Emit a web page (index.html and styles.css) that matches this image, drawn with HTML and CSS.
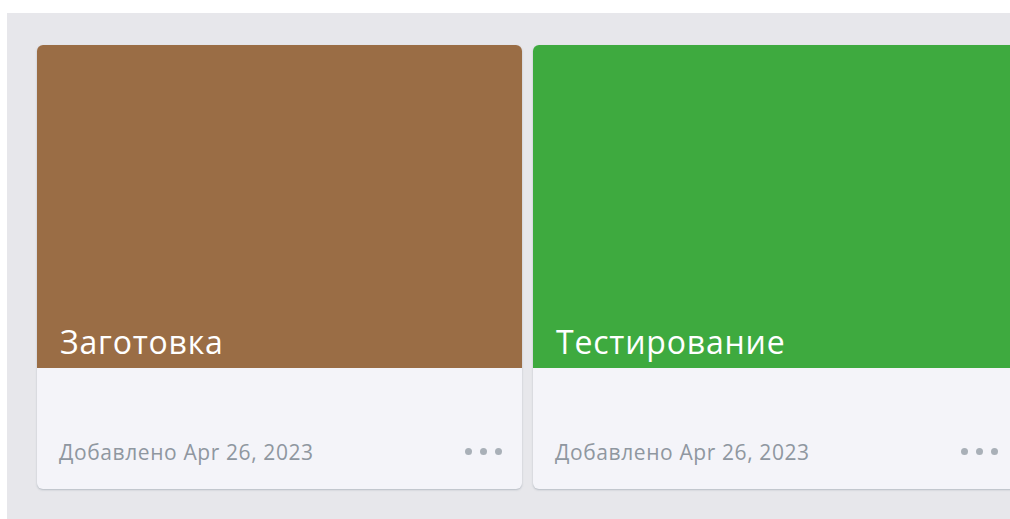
FILE: index.html
```html
<!DOCTYPE html>
<html lang="ru">
<head>
<meta charset="utf-8">
<title>Проекты</title>
<link rel="stylesheet" href="styles.css">
</head>
<body>
<main class="board">
  <div class="cards">
    <article class="card">
      <div class="card-cover cover-brown">
        <h2 class="card-title">Заготовка</h2>
      </div>
      <div class="card-footer">
        <span class="card-date">Добавлено Apr 26, 2023</span>
        <button class="card-menu" aria-label="Меню"><i></i><i></i><i></i></button>
      </div>
    </article>
    <article class="card">
      <div class="card-cover cover-green">
        <h2 class="card-title">Тестирование</h2>
      </div>
      <div class="card-footer">
        <span class="card-date">Добавлено Apr 26, 2023</span>
        <button class="card-menu" aria-label="Меню"><i></i><i></i><i></i></button>
      </div>
    </article>
  </div>
</main>
</body>
</html>
```

FILE: styles.css
```css
html, body {
  margin: 0;
  padding: 0;
  background: #ffffff;
  overflow: hidden;
}

body {
  font-family: "Open Sans", "Noto Sans", sans-serif;
  padding: 13px 0 0 7px;
}

.board {
  background: #e7e7eb;
  height: 520px;
  padding: 32px 0 0 30px;
  box-sizing: border-box;
  overflow: hidden;
}

.cards {
  display: flex;
  gap: 11px;
  width: 2000px;
}

.card {
  width: 485px;
  flex: 0 0 485px;
  border-radius: 6px;
  overflow: hidden;
  background: #f4f4f9;
  box-shadow: 0 1px 2px rgba(90, 105, 120, 0.35);
}

.card-cover {
  height: 323px;
  display: flex;
  align-items: flex-end;
  padding: 0 22px 8px 23px;
  box-sizing: border-box;
}

.cover-brown { background: #9a6d45; }
.cover-green { background: #3eaa3f; }

.card-title {
  margin: 0;
  color: #ffffff;
  font-weight: 400;
  font-size: 32px;
  line-height: 36px;
  letter-spacing: 0.8px;
}

.card-footer {
  height: 121px;
  display: flex;
  align-items: flex-end;
  justify-content: space-between;
  padding: 0 20px 25px 22px;
  box-sizing: border-box;
}

.card-date {
  color: #8f97a0;
  font-size: 21px;
  line-height: 24px;
  letter-spacing: 0.6px;
}

.card-menu {
  display: flex;
  gap: 8px;
  padding: 0;
  border: 0;
  background: none;
  margin-bottom: 9px;
}

.card-menu i {
  width: 7px;
  height: 7px;
  border-radius: 50%;
  background: #a9b0b8;
}
```
